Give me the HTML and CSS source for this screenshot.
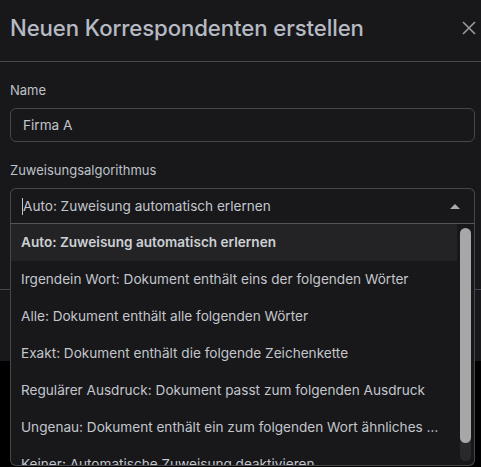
FILE: index.html
```html
<!DOCTYPE html>
<html lang="de">
<head>
    <meta charset="UTF-8">
    <meta name="viewport" content="width=device-width, initial-scale=1.0">
    <title>Neuen Korrespondenten erstellen</title>
    <link rel="stylesheet" href="styles.css">
</head>
<body>
    <div class="modal">
        <!-- Kopfzeile -->
        <div class="modal-header">
            <h4 class="modal-title">Neuen Korrespondenten erstellen</h4>
            <button type="button" class="btn-close" aria-label="Schließen">
                <svg width="16" height="16" viewBox="0 0 16 16"><path d="M2 2L14 14M14 2L2 14" stroke="currentColor" stroke-width="1.6" fill="none"/></svg>
            </button>
        </div>

        <!-- Formular -->
        <div class="modal-body">
            <label class="form-label" for="name">Name</label>
            <input type="text" id="name" class="form-control" value="Firma A">

            <label class="form-label">Zuweisungsalgorithmus</label>
            <div class="ng-select">
                <div class="ng-select-container">
                    <span class="caret-line"></span>
                    <span class="ng-value">Auto: Zuweisung automatisch erlernen</span>
                    <span class="ng-arrow"></span>
                </div>
                <div class="ng-dropdown-panel">
                    <div class="ng-options">
                        <div class="ng-option selected">Auto: Zuweisung automatisch erlernen</div>
                        <div class="ng-option">Irgendein Wort: Dokument enthält eins der folgenden Wörter</div>
                        <div class="ng-option">Alle: Dokument enthält alle folgenden Wörter</div>
                        <div class="ng-option">Exakt: Dokument enthält die folgende Zeichenkette</div>
                        <div class="ng-option">Regulärer Ausdruck: Dokument passt zum folgenden Ausdruck</div>
                        <div class="ng-option">Ungenau: Dokument enthält ein zum folgenden Wort ähnliches Wort</div>
                        <div class="ng-option">Keiner: Automatische Zuweisung deaktivieren</div>
                    </div>
                    <!-- Scrollleiste der Liste -->
                    <div class="scroll-track">
                        <div class="scroll-thumb"></div>
                    </div>
                </div>
            </div>
        </div>

        <div class="modal-footer"></div>
    </div>
    <div class="backdrop"></div>
</body>
</html>
```

FILE: styles.css
```css
html, body {
    margin: 0;
    height: 100%;
}

body {
    background-color: #000;
    font-family: Inter, "Noto Sans", sans-serif;
    color: #c3c6cc;
    display: flex;
    flex-direction: column;
}

.modal {
    background-color: #18181b;
    height: 361px;
    flex-shrink: 0;
    position: relative;
    z-index: 2;
}

.backdrop {
    flex: 1;
    background-color: #000;
}

.modal-header {
    height: 62px;
    display: flex;
    align-items: center;
    justify-content: space-between;
    padding: 0 4px 0 10px;
    border-bottom: 1px solid #48484c;
    box-sizing: border-box;
}

.modal-title {
    margin: 0;
    font-size: 22.2px;
    font-weight: 500;
    color: #b6bac3;
    letter-spacing: -0.1px;
    padding-bottom: 6px;
}

.btn-close {
    background: none;
    border: none;
    color: #9a9a9e;
    padding: 0;
    width: 16px;
    height: 16px;
    margin-bottom: 6px;
}

.modal-body {
    padding: 20px 6px 0 10px;
    height: 227px;
    box-sizing: border-box;
}

.form-label {
    display: block;
    font-size: 13px;
    color: #bfc2c8;
    margin-bottom: 10px;
}

.form-control {
    display: block;
    width: 100%;
    box-sizing: border-box;
    height: 34px;
    margin: 0 0 20px;
    padding: 0 12px;
    background-color: #18181b;
    border: 1px solid #47474b;
    border-radius: 6px;
    color: #c3c6cc;
    font-family: inherit;
    font-size: 13.6px;
}

.ng-select {
    position: relative;
}

.ng-select-container {
    height: 36px;
    box-sizing: border-box;
    display: flex;
    align-items: center;
    padding: 0 14px 0 11px;
    border: 1px solid #47474b;
    border-bottom-color: #555559;
    border-radius: 6px 6px 0 0;
    font-size: 13.6px;
}

.caret-line {
    width: 1px;
    height: 17px;
    background-color: #c3c6cc;
}

.ng-value {
    flex: 1;
}

.ng-arrow {
    width: 0;
    height: 0;
    border-left: 5px solid transparent;
    border-right: 5px solid transparent;
    border-bottom: 5px solid #a9abb0;
}

/* Aufgeklappte Liste über dem Rest des Dialogs */
.ng-dropdown-panel {
    position: absolute;
    z-index: 10;
    top: 36px;
    left: 0;
    right: 0;
    height: 242px;
    box-sizing: border-box;
    display: flex;
    background-color: #18181b;
    border: 1px solid #47474b;
    border-top: none;
    border-radius: 0 0 6px 6px;
    overflow: hidden;
}

.ng-options {
    flex: 1;
    min-width: 0;
}

.scroll-track {
    width: 11px;
    margin: 4px 3px 4px 3px;
    background-color: #29292b;
    border-radius: 6px;
}

.scroll-thumb {
    height: 215px;
    background-color: #a7a7a7;
    border-radius: 6px;
}

.ng-option {
    height: 37px;
    line-height: 37px;
    padding: 0 15px 0 10px;
    font-size: 13.6px;
    color: #c3c6cc;
    white-space: nowrap;
    overflow: hidden;
    text-overflow: ellipsis;
}

.ng-option.selected {
    background-color: #232325;
    font-weight: 600;
    color: #cdd0d5;
}

.modal-footer {
    border-top: 1px solid #48484c;
    height: 71px;
    box-sizing: border-box;
}
```
